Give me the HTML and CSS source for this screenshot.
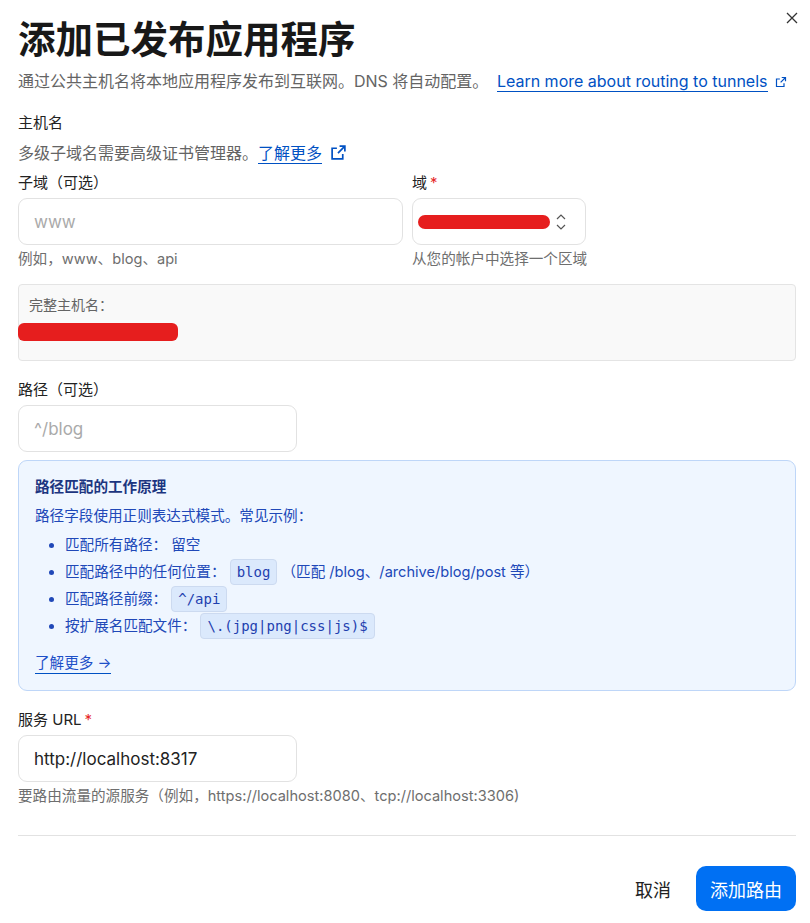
FILE: index.html
```html
<!DOCTYPE html>
<html>
  <head>
    <meta charset="UTF-8">
    <title>添加已发布应用程序</title>
    <link rel="stylesheet" href="styles.css">
  </head>
  <body>
    <div class="dialog">
      <button type="button" class="close" aria-label="关闭">
        <svg width="12" height="12" viewBox="0 0 12 12"><path d="M1 1L11 11M11 1L1 11" stroke="#333" stroke-width="1.3" fill="none"/></svg>
      </button>

      <h1>添加已发布应用程序</h1>
      <p class="lead">
        通过公共主机名将本地应用程序发布到互联网。DNS 将自动配置。
        <a href="#" class="link">Learn more about routing to tunnels</a>
        <svg class="ext small" viewBox="0 0 16 16"><path d="M9 2h5v5M14 2L7.5 8.5M12 9.5V14H2V4h4.5" stroke="currentColor" stroke-width="1.6" fill="none"/></svg>
      </p>

      <div class="section-label">主机名</div>
      <p class="note">
        多级子域名需要高级证书管理器。<a href="#" class="link">了解更多</a>
        <svg class="ext" viewBox="0 0 16 16"><path d="M9 2h5v5M14 2L7.5 8.5M12 9.5V14H2V4h4.5" stroke="currentColor" stroke-width="1.6" fill="none"/></svg>
      </p>

      <div class="host-row">
        <div class="field">
          <label>子域（可选）</label>
          <input type="text" placeholder="www">
          <div class="hint">例如，www、blog、api</div>
        </div>
        <div class="field">
          <label>域<span class="req">*</span></label>
          <div class="select">
            <span class="redact wide"></span>
            <svg class="chevrons" width="10" height="18" viewBox="0 0 10 18"><path d="M1 6l4-4 4 4M1 12l4 4 4-4" stroke="#555" stroke-width="1.2" fill="none"/></svg>
          </div>
          <div class="hint">从您的帐户中选择一个区域</div>
        </div>
      </div>

      <div class="full-host">
        <div class="full-host-label">完整主机名：</div>
        <span class="redact"></span>
      </div>

      <div class="field path-field">
        <label>路径（可选）</label>
        <input type="text" class="short" placeholder="^/blog">
      </div>

      <div class="info">
        <div class="info-title">路径匹配的工作原理</div>
        <p class="info-text">路径字段使用正则表达式模式。常见示例：</p>
        <ul>
          <li>匹配所有路径： 留空</li>
          <li>匹配路径中的任何位置： <code>blog</code> （匹配 /blog、/archive/blog/post 等）</li>
          <li>匹配路径前缀： <code>^/api</code></li>
          <li>按扩展名匹配文件： <code>\.(jpg|png|css|js)$</code></li>
        </ul>
        <a href="#" class="link">了解更多 →</a>
      </div>

      <div class="field">
        <label>服务 URL<span class="req">*</span></label>
        <input type="text" class="short" value="http://localhost:8317">
        <div class="hint">要路由流量的源服务（例如，https://localhost:8080、tcp://localhost:3306)</div>
      </div>

      <div class="actions">
        <button type="button" class="cancel">取消</button>
        <button type="button" class="primary">添加路由</button>
      </div>
    </div>
  </body>
</html>
```

FILE: styles.css
```css
* {
  box-sizing: border-box;
}
body {
  margin: 0;
  background: white;
  font-family: Inter, "Noto Sans CJK SC", sans-serif;
  color: rgb(34, 34, 34);
}
.dialog {
  position: relative;
  padding: 16px 14px 0 18px;
}
.close {
  position: absolute;
  top: 12px;
  right: 12px;
  border: none;
  background: none;
  padding: 0;
  width: 12px;
  height: 12px;
  cursor: pointer;
}
.close svg {
  display: block;
}
h1 {
  font-size: 37.5px;
  line-height: 48px;
  font-weight: 700;
  margin: 0;
  color: rgb(24, 24, 24);
}
.lead {
  font-size: 16px;
  line-height: 24px;
  margin: 5px 0 0;
  color: rgb(100, 100, 100);
}
.link {
  color: rgb(0, 81, 195);
  text-decoration: none;
  border-bottom: 1px solid rgb(0, 81, 195);
}
.lead .link {
  margin-left: 4px;
}
.ext {
  width: 17px;
  height: 17px;
  color: rgb(0, 81, 195);
  vertical-align: -2px;
  margin-left: 3px;
}
.ext.small {
  width: 12px;
  height: 12px;
  vertical-align: -1px;
}
.section-label {
  font-size: 15px;
  line-height: 22px;
  margin-top: 19px;
}
.note {
  font-size: 16px;
  line-height: 24px;
  margin: 7px 0 0;
  color: rgb(100, 100, 100);
}
.host-row {
  display: grid;
  grid-template-columns: 385px 174px;
  gap: 9px;
  margin-top: 7px;
}
.field label {
  display: block;
  font-size: 15px;
  line-height: 22px;
  margin-bottom: 4px;
}
.req {
  color: rgb(230, 40, 40);
  margin-left: 3px;
}
input {
  display: block;
  width: 100%;
  height: 47px;
  border: 1px solid rgb(226, 226, 226);
  border-radius: 9px;
  padding: 0 15px;
  font-family: Inter, "Noto Sans CJK SC", sans-serif;
  font-size: 17px;
  color: rgb(34, 34, 34);
  background: white;
}
input::placeholder {
  color: rgb(170, 170, 170);
}
input.short {
  width: 279px;
}
.select {
  display: flex;
  align-items: center;
  gap: 6px;
  height: 47px;
  border: 1px solid rgb(226, 226, 226);
  border-radius: 9px;
  padding: 0 14px 0 5px;
}
.redact {
  display: block;
  width: 160px;
  height: 18px;
  border-radius: 6px;
  background: rgb(230, 30, 30);
}
.redact.wide {
  width: 132px;
  height: 14px;
  border-radius: 7px;
}
.hint {
  font-size: 14.6px;
  line-height: 20px;
  margin-top: 4px;
  color: rgb(110, 110, 110);
  white-space: nowrap;
}
.full-host {
  margin-top: 15px;
  height: 77px;
  border: 1px solid rgb(228, 228, 228);
  border-radius: 4px;
  background: rgb(249, 249, 249);
  padding: 10px 0 0 0;
}
.full-host-label {
  font-size: 14px;
  line-height: 20px;
  color: rgb(100, 100, 100);
  margin-left: 10px;
}
.full-host .redact {
  margin: 8px 0 0 -1px;
}
.path-field {
  margin-top: 18px;
}
.info {
  margin-top: 8px;
  border: 1px solid rgb(190, 214, 248);
  border-radius: 9px;
  background: rgb(239, 246, 255);
  padding: 15px 16px 16px;
  color: rgb(32, 72, 184);
}
.info-title {
  font-size: 14.6px;
  line-height: 22px;
  font-weight: 700;
  color: rgb(28, 53, 128);
}
.info-text {
  font-size: 14.6px;
  line-height: 22px;
  margin: 7px 0 0;
}
.info ul {
  margin: 5px 0 0;
  padding-left: 30px;
  font-size: 14.6px;
}
.info li {
  line-height: 27px;
}
code {
  display: inline-block;
  font-family: "DejaVu Sans Mono", monospace;
  font-size: 14px;
  line-height: 24px;
  padding: 0 6px;
  border: 1px solid rgb(204, 218, 240);
  border-radius: 4px;
  background: rgb(219, 233, 252);
  color: rgb(30, 64, 175);
}
.info .link {
  display: inline-block;
  margin-top: 13px;
  font-size: 14.6px;
  line-height: 20px;
  color: rgb(30, 80, 200);
}
.info + .field {
  margin-top: 18px;
}
.actions {
  margin-top: 29px;
  border-top: 1px solid rgb(226, 226, 226);
  padding-top: 30px;
  display: flex;
  justify-content: flex-end;
  align-items: center;
  gap: 25px;
}
button {
  font-family: Inter, "Noto Sans CJK SC", sans-serif;
  font-size: 18px;
  cursor: pointer;
}
.cancel {
  border: none;
  background: none;
  color: rgb(34, 34, 34);
  padding: 0;
}
.primary {
  border: none;
  border-radius: 10px;
  background: rgb(0, 112, 243);
  color: white;
  height: 45px;
  padding: 0 14px;
}
```
